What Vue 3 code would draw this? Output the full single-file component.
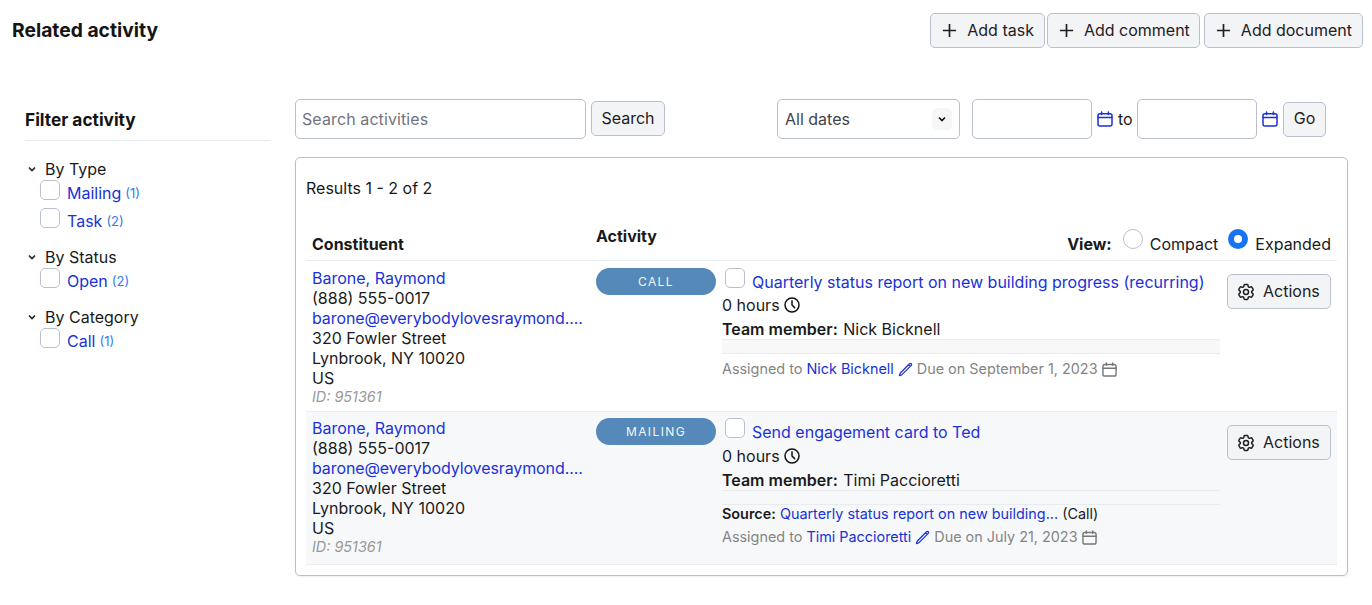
<script setup>
const filters = [
  { title: 'By Type', items: [{ label: 'Mailing', count: 1 }, { label: 'Task', count: 2 }] },
  { title: 'By Status', items: [{ label: 'Open', count: 2 }] },
  { title: 'By Category', items: [{ label: 'Call', count: 1 }] }
]
const rows = [
  { chip: 'CALL', title: 'Quarterly status report on new building progress (recurring)', member: 'Nick Bicknell', due: 'September 1, 2023', source: false },
  { chip: 'MAILING', title: 'Send engagement card to Ted', member: 'Timi Paccioretti', due: 'July 21, 2023', source: true }
]
const addButtons = ['Add task', 'Add comment', 'Add document']
</script>

<template>
  <div class="page">
    <svg class="defs" aria-hidden="true">
      <symbol id="i-plus" viewBox="0 0 16 16"><path d="M8 1v14M1 8h14" fill="none" stroke="currentColor" stroke-width="1.800" /></symbol>
      <symbol id="i-cal" viewBox="0 0 16 16"><g fill="none" stroke="currentColor" stroke-width="1.5" stroke-linecap="round"><rect x="1" y="2.700" width="14" height="12.300" rx="2" /><path d="M1 6.600h14M4.600 1v2.400M11.400 1v2.400" /></g></symbol>
      <symbol id="i-chev" viewBox="0 0 10 10"><path d="M2 3.500 5 6.500 8 3.500" fill="none" stroke="currentColor" stroke-width="1.600" /></symbol>
      <symbol id="i-clock" viewBox="0 0 16 16"><g fill="none" stroke="currentColor" stroke-width="1.500" stroke-linecap="round" stroke-linejoin="round"><circle cx="8" cy="8" r="7" /><path d="M8 3.800V8l2.600 2.600" /></g></symbol>
      <symbol id="i-pen" viewBox="0 0 24 24"><path d="m16.862 4.487 1.687-1.688a1.875 1.875 0 1 1 2.652 2.652L6.832 19.820a4.500 4.500 0 0 1-1.897 1.130l-2.685.8.8-2.685a4.500 4.500 0 0 1 1.130-1.897L16.863 4.487Zm0 0L19.500 7.125" fill="none" stroke="currentColor" stroke-width="2" stroke-linecap="round" stroke-linejoin="round" /></symbol>
      <symbol id="i-gear" viewBox="0 0 24 24"><g fill="none" stroke="currentColor" stroke-width="1.800" stroke-linecap="round" stroke-linejoin="round"><path d="M9.594 3.940c.09-.542.56-.94 1.110-.94h2.593c.55 0 1.020.398 1.110.94l.213 1.281c.063.374.313.686.645.870.074.04.147.083.22.127.325.196.72.257 1.075.124l1.217-.456a1.125 1.125 0 0 1 1.370.49l1.296 2.247a1.125 1.125 0 0 1-.26 1.431l-1.003.827c-.293.241-.438.613-.43.992a7.723 7.723 0 0 1 0 .255c-.008.378.137.75.43.991l1.004.827c.424.35.534.955.26 1.430l-1.298 2.247a1.125 1.125 0 0 1-1.369.491l-1.217-.456c-.355-.133-.75-.072-1.076.124a6.470 6.470 0 0 1-.22.128c-.331.183-.581.495-.644.869l-.213 1.281c-.09.543-.56.94-1.110.94h-2.594c-.55 0-1.019-.398-1.110-.94l-.213-1.281c-.062-.374-.312-.686-.644-.87a6.520 6.520 0 0 1-.22-.127c-.325-.196-.72-.257-1.076-.124l-1.217.456a1.125 1.125 0 0 1-1.369-.49l-1.297-2.247a1.125 1.125 0 0 1 .26-1.431l1.004-.827c.292-.24.437-.613.43-.991a6.932 6.932 0 0 1 0-.255c.007-.38-.138-.751-.43-.992l-1.004-.827a1.125 1.125 0 0 1-.26-1.430l1.297-2.247a1.125 1.125 0 0 1 1.370-.491l1.216.456c.356.133.751.072 1.076-.124.072-.044.146-.086.22-.128.332-.183.582-.495.644-.869l.214-1.280Z" /><path d="M15 12a3 3 0 1 1-6 0 3 3 0 0 1 6 0Z" /></g></symbol>
    </svg>

    <header class="top">
      <h1>Related activity</h1>
      <div class="add-group">
        <button v-for="b in addButtons" :key="b" class="btn add">
          <svg class="ic-plus"><use href="#i-plus" /></svg>{{ b }}
        </button>
      </div>
    </header>

    <div class="body">
      <aside class="side">
        <h2>Filter activity</h2>
        <section v-for="g in filters" :key="g.title" class="group">
          <div class="group-title">
            <svg class="ic-chev"><use href="#i-chev" /></svg>{{ g.title }}
          </div>
          <label v-for="i in g.items" :key="i.label" class="filter-item">
            <span class="check"></span>
            <a class="link">{{ i.label }}</a>
            <span class="count">({{ i.count }})</span>
          </label>
        </section>
      </aside>

      <main class="main">
        <div class="toolbar">
          <div class="search">
            <input class="input search-input" placeholder="Search activities" />
            <button class="btn search-btn">Search</button>
          </div>
          <div class="dates">
            <div class="input select">
              All dates
              <span class="sel-arrow"><svg><use href="#i-chev" /></svg></span>
            </div>
            <input class="input date first" />
            <svg class="ic-cal"><use href="#i-cal" /></svg>
            <span class="to">to</span>
            <input class="input date" />
            <svg class="ic-cal"><use href="#i-cal" /></svg>
            <button class="btn go">Go</button>
          </div>
        </div>

        <div class="card">
          <div class="results">Results 1 - 2 of 2</div>
          <div class="head">
            <div class="h-con">Constituent</div>
            <div class="h-act">Activity</div>
            <div class="h-view">
              <b>View:</b>
              <span class="radio"></span><span class="r-label">Compact</span>
              <span class="radio on"></span><span class="r-label">Expanded</span>
            </div>
          </div>

          <div v-for="r in rows" :key="r.chip" class="row" :class="{ alt: r.source }">
            <div class="con">
              <a class="link">Barone, Raymond</a>
              <div>(888) 555-0017</div>
              <a class="link email">barone@everybodylovesraymond....</a>
              <div>320 Fowler Street</div>
              <div>Lynbrook, NY 10020</div>
              <div>US</div>
              <div class="id">ID: 951361</div>
            </div>
            <div class="chip-col"><span class="chip">{{ r.chip }}</span></div>
            <div class="content">
              <div class="title-line">
                <span class="check"></span>
                <a class="link">{{ r.title }}</a>
              </div>
              <div class="hours">0 hours <svg class="ic-clock"><use href="#i-clock" /></svg></div>
              <div class="member"><b>Team member:</b> {{ r.member }}</div>
              <div class="band"></div>
              <div v-if="r.source" class="source">
                <b>Source:</b> <a class="link">Quarterly status report on new building...</a> (Call)
              </div>
              <div class="assigned">
                Assigned to <a class="link">{{ r.member }}</a>
                <svg class="ic-pen"><use href="#i-pen" /></svg>
                Due on {{ r.due }}
                <svg class="ic-cal-s"><use href="#i-cal" /></svg>
              </div>
            </div>
            <div class="act-col">
              <button class="btn actions"><svg class="ic-gear"><use href="#i-gear" /></svg>Actions</button>
            </div>
          </div>
        </div>
      </main>
    </div>
  </div>
</template>

<style scoped>
.page {
  width: 1372px;
  height: 605px;
  overflow: hidden;
  box-sizing: border-box;
  padding: 13px 9px 0 12px;
  font-family: Inter, "Liberation Sans", sans-serif;
  font-size: 16px;
  line-height: 20px;
  color: #1a1a1a;
  background: #fff;
}
.defs { position: absolute; width: 0; height: 0; }
.top { display: flex; justify-content: space-between; align-items: flex-start; height: 34px; }
h1 { margin: 7px 0 0; font-size: 19.3px; line-height: 20px; font-weight: 700; color: #141414; }
.add-group { display: flex; gap: 2px; }
.btn {
  box-sizing: border-box;
  font: inherit;
  color: #1f2023;
  background: #f3f4f6;
  border: 1px solid #b9bfcc;
  border-radius: 5px;
  cursor: pointer;
  padding: 0;
}
.add { height: 35px; display: flex; align-items: center; padding: 0 10px 2px 11px; }
.add:nth-child(2) { padding-right: 9px; }
.add:nth-child(3) { margin-left: 2px; }
.ic-plus { width: 15px; height: 15px; margin-right: 10px; margin-top: 2px; }

.body { display: flex; margin-top: 52px; }
.side { width: 245px; margin-left: 13px; flex: none; }
h2 {
  margin: 11px 0 0;
  padding: 0 0 10px;
  font-size: 17.3px;
  line-height: 20px;
  font-weight: 700;
  border-bottom: 1px solid #e7e9ee;
  color: #141414;
}
.group { margin-top: 16px; padding-left: 2px; }
.group:first-of-type { margin-top: 18px; }
.group-title { display: flex; align-items: center; height: 20px; }
.ic-chev { width: 10px; height: 10px; margin-right: 8px; color: #222; }
.filter-item { display: flex; align-items: center; margin: 4px 0 0 13px; height: 20px; }
.filter-item + .filter-item { margin-top: 8px; margin-bottom: 1px; }
.check {
  flex: none;
  width: 20px;
  height: 20px;
  box-sizing: border-box;
  background: #fff;
  border: 1px solid #b9bfcc;
  border-radius: 5px;
  display: inline-block;
}
.filter-item .check { margin-right: 7px; position: relative; top: -3px; }
.link { color: #1a32d6; text-decoration: none; }
.count { color: #2f7cf0; font-size: 13px; margin-left: 4px; }

.main { margin-left: 25px; width: 1053px; flex: none; }
.toolbar { display: flex; align-items: flex-start; height: 40px; }
.search { display: flex; align-items: center; height: 40px; }
.input {
  box-sizing: border-box;
  height: 40px;
  background: #fff;
  border: 1px solid #b9bfcc;
  border-radius: 5px;
  font: inherit;
  outline: none;
}
.search-input { width: 291px; padding: 0 6px; letter-spacing: .1px; }
.search-input::placeholder { color: #6f7480; opacity: 1; }
.search-btn { width: 74px; height: 35px; margin-left: 5px; position: relative; top: -1px; }
.dates { display: flex; align-items: center; height: 40px; margin-left: 112px; }
.select { width: 183px; display: flex; align-items: center; justify-content: space-between; padding: 0 7px 0 7px; color: #3f434a; }
.sel-arrow { width: 20px; height: 22px; background: #f6f6f7; border-radius: 5px; display: flex; align-items: center; justify-content: center; color: #111; }
.sel-arrow svg { width: 10px; height: 10px; }
.date { width: 120px; }
.date.first { margin-left: 12px; }
.ic-cal { width: 16px; height: 16px; margin-left: 5px; color: #1a32d6; }
.to { margin: 0 5px; width: 14px; }
.go { width: 43px; height: 35px; margin-left: 5px; padding-bottom: 2px; }

.card {
  box-sizing: border-box;
  margin-top: 18px;
  height: 419px;
  border: 1px solid #b9bfcc;
  border-radius: 5px;
  padding: 20px 10px 0;
  box-shadow: 0 1px 2px rgba(30, 40, 60, .08);
}
.results { height: 20px; }
.head {
  display: flex;
  height: 63px;
  box-sizing: border-box;
  border-bottom: 1px solid #e9ebef;
}
.h-con { padding: 36px 0 0 6px; width: 284px; font-weight: 700; }
.h-act { padding-top: 28px; font-weight: 700; }
.h-view { margin-left: auto; padding: 32px 6px 0 0; display: flex; align-items: flex-start; height: 30px; }
.h-view b { font-weight: 700; margin: 4px 11px 0 0; }
.r-label { margin-top: 4px; margin-left: 7px; }
.radio { width: 20px; height: 20px; box-sizing: border-box; border-radius: 50%; border: 1px solid #b9bfcc; background: #fff; flex: none; margin-top: -1px; }
.r-label + .radio { margin-left: 10px; }
.radio.on { border: 6px solid #1674f2; }

.row { display: flex; height: 151px; border-bottom: 1px solid #e9ebef; box-sizing: border-box; }
.row.alt { background: #f7f8fa; height: 153px; }
.con { width: 284px; margin-left: 6px; padding-top: 7px; flex: none; }
.alt .con, .alt .chip-col, .alt .content { padding-top: 6px; }
.con .link { display: block; }
.email { white-space: nowrap; letter-spacing: -.1px; }
.id { font-style: italic; font-size: 14.4px; color: #999; line-height: 16px; margin-top: 1px; }
.chip-col { width: 126px; padding-top: 7px; flex: none; }
.chip {
  display: flex;
  width: 120px;
  height: 27px;
  align-items: center;
  justify-content: center;
  border-radius: 14px;
  background: #5589b9;
  color: #f2f6fa;
  font-size: 12px;
  letter-spacing: 1.4px;
}
.content { width: 498px; flex: none; padding-top: 7px; }
.title-line { display: flex; align-items: flex-start; padding-left: 3px; height: 20px; }
.title-line .link { margin-left: 7px; padding-top: 4px; white-space: nowrap; }
.hours { display: flex; align-items: center; gap: 4px; margin-top: 7px; height: 20px; }
.alt .hours { margin-top: 8px; }
.ic-clock { width: 16px; height: 16px; color: #111; }
.member { margin-top: 4px; }
.member b, .source b { font-weight: 600; }
.member b { margin-right: 1px; }
.band { height: 13px; background: #f8f8f8; border-top: 1px solid #e9ebef; border-bottom: 1px solid #e9ebef; }
.alt .band { background: transparent; }
.source { font-size: 14.4px; line-height: 20px; height: 20px; margin-top: -1px; }
.assigned { font-size: 14.4px; color: #858585; margin-top: 5px; display: flex; gap: 4px; align-items: center; white-space: nowrap; }
.alt .assigned { margin-top: 3px; }
.ic-pen { width: 15px; height: 15px; color: #1a32d6; }
.ic-cal-s { width: 15px; height: 15px; color: #777; }
.act-col { padding: 13px 0 0 7px; }
.actions { width: 104px; height: 35px; display: flex; align-items: center; padding: 0 0 2px 8px; }
.ic-gear { width: 20px; height: 20px; margin: 2px 7px 0 0; }
</style>

<style>
html, body { margin: 0; background: #fff; }
</style>
